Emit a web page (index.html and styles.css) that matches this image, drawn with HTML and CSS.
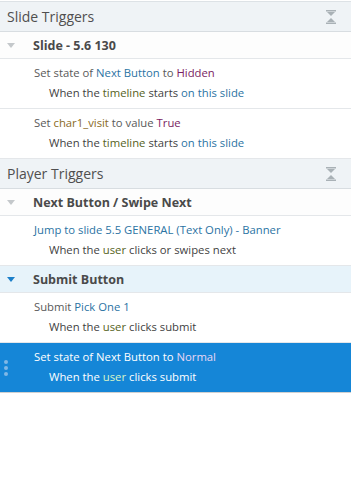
FILE: index.html
```html
<!DOCTYPE html>
<html lang="en">
<head>
  <meta charset="UTF-8">
  <title>Triggers</title>
  <link rel="stylesheet" href="styles.css">
</head>
<body>
  <div class="panel">
    <div class="section-head">
      <span>Slide Triggers</span>
      <svg class="collapse" width="12" height="14" viewBox="0 0 12 14"><path d="M1 0h10v1.5H1zM2 2h8l-4 4zM6 8l4 4H2zM1 12.5h10V14H1z" fill="#a9b1b6"/></svg>
    </div>
    <div class="group">
      <span class="arrow"></span>
      <span class="group-name">Slide - 5.6 130</span>
    </div>
    <div class="item">
      <div class="action">Set state of <span class="obj">Next Button</span> to <span class="val">Hidden</span></div>
      <div class="when">When the <span class="evt">timeline</span> starts <span class="obj">on this slide</span></div>
    </div>
    <div class="item">
      <div class="action">Set <span class="var">char1_visit</span> to value <span class="val">True</span></div>
      <div class="when">When the <span class="evt">timeline</span> starts <span class="obj">on this slide</span></div>
    </div>

    <div class="section-head">
      <span>Player Triggers</span>
      <svg class="collapse" width="12" height="14" viewBox="0 0 12 14"><path d="M1 0h10v1.5H1zM2 2h8l-4 4zM6 8l4 4H2zM1 12.5h10V14H1z" fill="#a9b1b6"/></svg>
    </div>
    <div class="group">
      <span class="arrow"></span>
      <span class="group-name">Next Button / Swipe Next</span>
    </div>
    <div class="item">
      <div class="action"><span class="obj">Jump to slide 5.5 GENERAL (Text Only) - Banner</span></div>
      <div class="when">When the <span class="evt">user</span> clicks or swipes next</div>
    </div>
    <div class="group group-active">
      <span class="arrow"></span>
      <span class="group-name">Submit Button</span>
    </div>
    <div class="item">
      <div class="action">Submit <span class="obj">Pick One 1</span></div>
      <div class="when">When the <span class="evt">user</span> clicks submit</div>
    </div>
    <div class="item selected">
      <span class="grip"><i></i><i></i><i></i></span>
      <div class="action">Set state of <span class="obj">Next Button</span> to <span class="val">Normal</span></div>
      <div class="when">When the <span class="evt">user</span> clicks submit</div>
    </div>
  </div>
</body>
</html>
```

FILE: styles.css
```css
body {
  margin: 0;
  background: #fff;
  font-family: "Open Sans", "Noto Sans", sans-serif;
  font-size: 11.3px;
  color: #555;
}

.panel {
  width: 351px;
  border-top: 1px solid #dde2e6;
  margin-top: 1px;
}

.section-head {
  height: 30px;
  box-sizing: border-box;
  display: flex;
  align-items: center;
  justify-content: space-between;
  padding: 0 14px 0 7px;
  background: #eff3f6;
  border-bottom: 1px solid #d8dde1;
  font-size: 14px;
  color: #4f4f4f;
}

.collapse {
  display: block;
}

.group {
  height: 27px;
  box-sizing: border-box;
  display: flex;
  align-items: center;
  background: #fdfdfd;
  border-bottom: 1px solid #e4e7ea;
}

.arrow {
  width: 0;
  height: 0;
  margin: 0 18px 0 7px;
  border-left: 4px solid transparent;
  border-right: 4px solid transparent;
  border-top: 5px solid #c4c8cb;
}

.group-name {
  font-weight: bold;
  font-size: 12.5px;
  color: #4a4a4a;
}

.group-active {
  background: #e7f3fa;
}

.group-active .arrow {
  border-top-color: #1c7fc9;
}

.item {
  position: relative;
  height: 50px;
  padding: 4px 0 0 34px;
  box-sizing: border-box;
  border-bottom: 1px solid #e4e7ea;
  background: #fff;
}

.action {
  line-height: 20px;
  color: #595959;
}

.when {
  line-height: 20px;
  padding-left: 15px;
  color: #3f3f3f;
}

.obj {
  color: #2b73a3;
}

.val {
  color: #7a1d62;
}

.var {
  color: #8a6a1e;
}

.evt {
  color: #55621c;
}

.selected {
  background: #1586d7;
  border-bottom-color: #d0d0d0;
  color: #fff;
}

.selected .action,
.selected .when,
.selected .obj {
  color: #fff;
}

.selected .val {
  color: #ead7f5;
}

.selected .evt {
  color: #d8f5c8;
}

.grip {
  position: absolute;
  left: 4px;
  top: 17px;
  display: flex;
  flex-direction: column;
  gap: 2px;
}

.grip i {
  width: 4px;
  height: 4px;
  border-radius: 50%;
  background: #7fb8e6;
}
```
